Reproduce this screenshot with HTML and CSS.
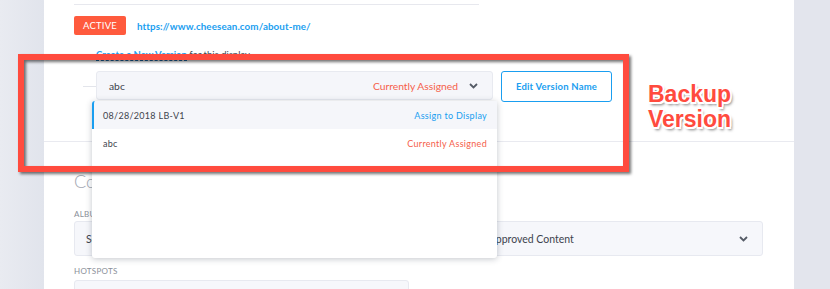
FILE: index.html
```html
<!DOCTYPE html>
<html lang="en">
<head>
  <meta charset="UTF-8" />
  <meta name="viewport" content="width=device-width, initial-scale=1.0" />
  <title>Display Versions</title>
  <link rel="stylesheet" href="styles.css">
</head>
<body>
  <div class="page">
    <aside class="gutter"></aside>

    <main class="panel">
      <div class="top-rule"></div>

      <div class="status-row">
        <span class="badge">ACTIVE</span>
        <a class="url">https://www.cheesean.com/about-me/</a>
      </div>

      <p class="create"><a class="create-link">Create a New Version</a> for this display</p>

      <div class="version-row">
        <span class="connector"></span>
        <div class="version-select">
          <span class="value">abc</span>
          <span class="assigned">Currently Assigned</span>
          <svg class="chevron" width="9" height="6" viewBox="0 0 9 6"><polyline points="1,1 4.5,4.5 8,1" fill="none" stroke="#555b66" stroke-width="1.8"/></svg>

          <ul class="menu">
            <li class="menu-item hover">
              <span>08/28/2018 LB-V1</span>
              <span class="assign">Assign to Display</span>
            </li>
            <li class="menu-item">
              <span>abc</span>
              <span class="assigned">Currently Assigned</span>
            </li>
          </ul>
        </div>
        <button class="edit-btn">Edit Version Name</button>
      </div>

      <div class="divider"></div>

      <h2 class="section-title">Content</h2>

      <div class="fields">
        <div class="field">
          <div class="label">ALBUM</div>
          <div class="select"><span>Select an Album</span></div>
        </div>
        <div class="field">
          <div class="label">FILTER</div>
          <div class="select"><span>Show Approved Content</span>
            <svg class="chevron" width="9" height="6" viewBox="0 0 9 6"><polyline points="1,1 4.5,4.5 8,1" fill="none" stroke="#555b66" stroke-width="1.8"/></svg>
          </div>
        </div>
      </div>

      <div class="label hot-label">HOTSPOTS</div>
      <div class="hotspots"></div>
    </main>

    <aside class="gutter right"></aside>

    <div class="callout"></div>
    <div class="callout-text">Backup<br>Version</div>
  </div>
</body>
</html>
```

FILE: styles.css
```css
body, html {
  margin: 0;
  padding: 0;
  height: 100%;
  overflow: hidden;
  font-family: 'Lato', 'Noto Sans', sans-serif;
  background: #e4e6ee;
}
.page {
  position: relative;
  display: flex;
  height: 289px;
}
.gutter {
  width: 44px;
  flex-shrink: 0;
  background: linear-gradient(to right, #e9ebf1, #e1e4ec);
}
.gutter.right {
  width: 36px;
  background: #e3e5ed;
}
.panel {
  width: 750px;
  flex-shrink: 0;
  background: #fff;
  padding: 4px 0 0 30px;
  box-sizing: border-box;
}
.top-rule {
  width: 405px;
  border-top: 1px solid #e7e8ee;
}
.status-row {
  display: flex;
  align-items: center;
  margin-top: 11px;
  gap: 11px;
}
.badge {
  width: 52px;
  height: 19px;
  line-height: 19px;
  text-align: center;
  background: #ff5a3d;
  color: #fff;
  border-radius: 2px;
  font-size: 9.5px;
  letter-spacing: 0.2px;
}
.url {
  color: #1a9ef0;
  font-size: 9.8px;
  font-weight: 700;
  letter-spacing: 0.1px;
}
.create {
  margin: 13px 0 0 22px;
  font-size: 9.5px;
  color: #444a55;
  line-height: 14px;
}
.create-link {
  color: #1a9ef0;
  font-weight: 700;
  border-bottom: 1px dashed #1a6fb0;
}
.version-row {
  display: flex;
  align-items: flex-start;
  margin-top: 9px;
}
.connector {
  width: 13px;
  margin: 15px 0 0 9px;
  border-top: 1px solid #e3e5eb;
}
.version-select {
  position: relative;
  display: flex;
  align-items: center;
  width: 397px;
  height: 29px;
  box-sizing: border-box;
  padding: 0 14px 0 12px;
  background: #f5f6fa;
  border: 1px solid #e8eaf0;
  border-radius: 3px;
  font-size: 10.3px;
  color: #3d434d;
}
.value { flex: 1; }
.assigned { color: #f5604a; }
.version-select .chevron { margin-left: 11px; }
.menu {
  position: absolute;
  left: -5px;
  top: 29px;
  width: 405px;
  height: 157px;
  margin: 0;
  padding: 0;
  list-style: none;
  background: #fff;
  border-radius: 3px;
  box-shadow: 0 1px 6px rgba(40, 50, 70, 0.28);
  z-index: 2;
}
.menu-item {
  display: flex;
  justify-content: space-between;
  align-items: center;
  height: 28px;
  padding: 0 10px 0 11px;
  font-size: 9px;
  color: #3d434d;
  letter-spacing: 0.3px;
}
.menu-item.hover {
  background: #f5f6fa;
  border-left: 2px solid #1a9ef0;
  padding-left: 9px;
  border-top-left-radius: 3px;
}
.assign { color: #1a9ef0; }
.edit-btn {
  margin-left: 8px;
  width: 111px;
  height: 31px;
  background: #fff;
  border: 1.5px solid #1a9ef0;
  border-radius: 3px;
  color: #1a9ef0;
  font-family: inherit;
  font-size: 9.5px;
  font-weight: 700;
  letter-spacing: 0.2px;
}
.divider {
  margin: 39px 0 0 -30px;
  border-top: 1px solid #e9eaf0;
}
.section-title {
  margin: 28px 0 0;
  font-size: 18px;
  font-weight: 300;
  color: #a3a8b2;
  line-height: 22px;
}
.fields {
  display: grid;
  grid-template-columns: 361px 1fr;
  gap: 14px;
  width: 689px;
  margin-top: 16px;
}
.label {
  font-size: 8px;
  letter-spacing: 0.3px;
  color: #8a8f99;
  line-height: 12px;
}
.select {
  display: flex;
  align-items: center;
  justify-content: space-between;
  height: 35px;
  margin-top: 1px;
  padding: 0 14px 0 11px;
  box-sizing: border-box;
  background: #f6f7fb;
  border: 1px solid #e7e9f0;
  border-radius: 3px;
  font-size: 10.5px;
  color: #3d434d;
}
.hot-label { margin-top: 9px; }
.hotspots {
  width: 333px;
  height: 20px;
  margin-top: 3px;
  background: #f6f7fb;
  border: 1px solid #e7e9f0;
  border-radius: 3px;
}
.callout {
  position: absolute;
  left: 18px;
  top: 54px;
  width: 611px;
  height: 118px;
  box-sizing: border-box;
  border: 6px solid #ff4b3e;
  filter: drop-shadow(2px 2px 1.5px rgba(0, 0, 0, 0.55));
  z-index: 5;
}
.callout-text {
  position: absolute;
  left: 648px;
  top: 82px;
  font-family: 'Liberation Sans', Arial, sans-serif;
  font-weight: 700;
  font-size: 23px;
  line-height: 25px;
  color: #ff4b3e;
  text-shadow:
    -1.5px 0 0 #fff, 1.5px 0 0 #fff, 0 -1.5px 0 #fff, 0 1.5px 0 #fff,
    -1.5px -1.5px 0 #fff, 1.5px -1.5px 0 #fff, -1.5px 1.5px 0 #fff, 1.5px 1.5px 0 #fff,
    2px 3px 3px rgba(0, 0, 0, 0.55);
  z-index: 5;
}
```
